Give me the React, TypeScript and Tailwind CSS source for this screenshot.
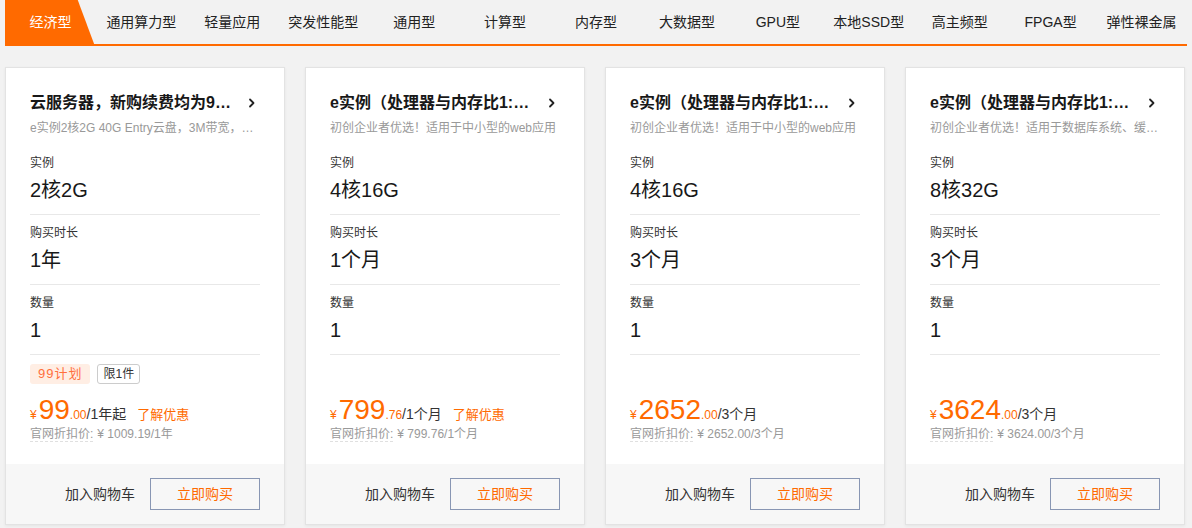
import React from 'react'

const tabs = [
  '经济型',
  '通用算力型',
  '轻量应用',
  '突发性能型',
  '通用型',
  '计算型',
  '内存型',
  '大数据型',
  'GPU型',
  '本地SSD型',
  '高主频型',
  'FPGA型',
  '弹性裸金属',
]

type Product = {
  title: string
  desc: string
  spec: string
  period: string
  count: string
  price: string
  cents: string
  unit: string
  promo?: boolean
  badges?: boolean
  list: string
}

const products: Product[] = [
  {
    title: '云服务器，新购续费均为99元/年',
    desc: 'e实例2核2G 40G Entry云盘，3M带宽，不限流量',
    spec: '2核2G',
    period: '1年',
    count: '1',
    price: '99',
    cents: '.00',
    unit: '/1年起',
    promo: true,
    badges: true,
    list: '¥ 1009.19/1年',
  },
  {
    title: 'e实例（处理器与内存比1:4）',
    desc: '初创企业者优选！适用于中小型的web应用',
    spec: '4核16G',
    period: '1个月',
    count: '1',
    price: '799',
    cents: '.76',
    unit: '/1个月',
    promo: true,
    list: '¥ 799.76/1个月',
  },
  {
    title: 'e实例（处理器与内存比1:4）',
    desc: '初创企业者优选！适用于中小型的web应用',
    spec: '4核16G',
    period: '3个月',
    count: '1',
    price: '2652',
    cents: '.00',
    unit: '/3个月',
    list: '¥ 2652.00/3个月',
  },
  {
    title: 'e实例（处理器与内存比1:4）',
    desc: '初创企业者优选！适用于数据库系统、缓存等场景',
    spec: '8核32G',
    period: '3个月',
    count: '1',
    price: '3624',
    cents: '.00',
    unit: '/3个月',
    list: '¥ 3624.00/3个月',
  },
]

function Chevron() {
  return (
    <svg width="14" height="14" viewBox="0 0 14 14" fill="none">
      <path d="M5 3.5l3.5 3.5-3.5 3.5" stroke="#222" strokeWidth="1.8" strokeLinecap="round" strokeLinejoin="round" />
    </svg>
  )
}

function Field({ label, value }: { label: string; value: string }) {
  return (
    <div className="border-b border-[#e8e8e8] pt-[9px] pb-[10px]">
      <div className="h-[18px] text-[12px] leading-[18px] text-[#333]">{label}</div>
      <div className="mt-[4px] h-[28px] text-[20px] leading-[28px] text-[#181818]">{value}</div>
    </div>
  )
}

function Card({ p }: { p: Product }) {
  return (
    <div className="flex h-[458px] w-[280px] flex-col border border-[#e3e3e3] bg-white shadow-[0_1px_3px_rgba(0,0,0,0.06)]">
      <div className="px-[24px] pt-[23px]">
        <div className="flex h-[24px] items-center justify-between">
          <div className="w-[206px] truncate text-[16px] font-bold leading-[24px] text-[#181818]">{p.title}</div>
          <div className="flex w-[16px] justify-center">
            <Chevron />
          </div>
        </div>
        <div className="mt-[4px] mb-[8px] truncate text-[12px] leading-[18px] text-[#999]">{p.desc}</div>
        <Field label="实例" value={p.spec} />
        <Field label="购买时长" value={p.period} />
        <Field label="数量" value={p.count} />
        <div className="mt-[9px] flex h-[20px] items-center gap-[7px]">
          {p.badges && (
            <>
              <span className="flex h-[20px] items-center rounded-[3px] bg-[#ffeee4] px-[8px] text-[13px] tracking-[1px] text-[#ff6f3c]">
                99计划
              </span>
              <span className="flex h-[20px] items-center rounded-[3px] border border-[#ccc] px-[5px] text-[12px] text-[#333]">
                限1件
              </span>
            </>
          )}
        </div>
        <div className="mt-[11px] flex h-[30px] items-baseline leading-[30px]">
          <span className="mr-[2px] text-[12px] text-[#ff6a00]">¥</span>
          <span className="text-[28px] text-[#ff6a00]">{p.price}</span>
          <span className="text-[12px] text-[#ff6a00]">{p.cents}</span>
          <span className="text-[14px] text-[#333]">{p.unit}</span>
          {p.promo && <span className="ml-[11px] text-[13px] text-[#ff6a00]">了解优惠</span>}
        </div>
        <div className="h-[18px] text-[12px] leading-[18px] text-[#999]">
          <span className="border-b border-dashed border-[#e0e0e0]">官网折扣价:</span>
          <span className="ml-[4px]">{p.list}</span>
        </div>
      </div>
      <div className="mt-auto flex h-[60px] items-center justify-end gap-[15px] bg-[#f7f7f7] pr-[24px]">
        <span className="text-[14px] text-[#333]">加入购物车</span>
        <button className="flex h-[32px] w-[110px] items-center justify-center border border-[#8896b3] bg-transparent text-[14px] text-[#ff6a00]">
          立即购买
        </button>
      </div>
    </div>
  )
}

export default function App() {
  return (
    <div className="h-[528px] w-[1192px] overflow-hidden bg-[#f2f2f2] px-[5px] font-['Liberation_Sans','Noto_Sans_CJK_SC',sans-serif]">
      <div className="flex h-[46px] border-b-2 border-[#ff6a00]">
        {tabs.map((t, i) => (
          <div key={t} className="relative flex flex-1 items-center justify-center">
            {i === 0 && (
              <div className="absolute inset-0 bg-[#ff6a00] [clip-path:polygon(0_0,80%_0,98%_100%,0_100%)]" />
            )}
            <span className={`relative text-[14px] ${i === 0 ? 'text-white' : 'text-[#222]'}`}>{t}</span>
          </div>
        ))}
      </div>
      <div className="mt-[21px] flex gap-[20px]">
        {products.map((p, i) => (
          <Card key={i} p={p} />
        ))}
      </div>
    </div>
  )
}
